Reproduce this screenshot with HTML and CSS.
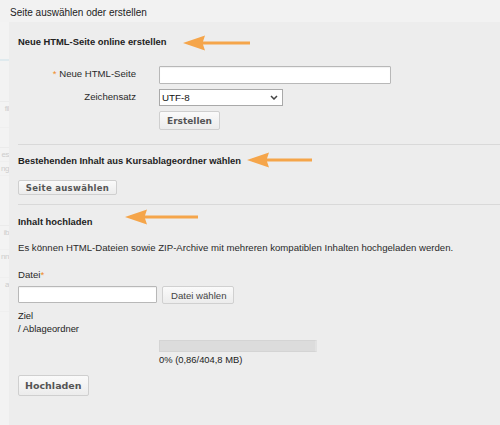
FILE: index.html
```html
<!DOCTYPE html>
<html lang="de">
<head>
<meta charset="utf-8">
<title>Seite auswählen oder erstellen</title>
<link rel="stylesheet" href="styles.css">
</head>
<body>
<div class="page">
  <div class="topbar">Seite auswählen oder erstellen</div>
  <div class="main">
    <div class="side">
      <div class="side-line blue" style="height:39px"></div>
      <div class="side-line" style="height:41px"></div>
      <div class="side-text" style="height:26px">fil</div>
      <div class="side-line" style="height:20px"></div>
      <div class="side-text" style="height:14px">es</div>
      <div class="side-text" style="height:14px">ng</div>
      <div class="side-line" style="height:50px"></div>
      <div class="side-text" style="height:24px">ib</div>
      <div class="side-text" style="height:28px">nn</div>
      <div class="side-text" style="height:34px">a</div>
    </div>
    <div class="panel">
      <section class="sec sec-first">
        <h3 class="sec-title">Neue HTML-Seite online erstellen</h3>
        <div class="form-grid">
          <label class="lbl"><span class="req">*</span> Neue HTML-Seite</label>
          <div class="field"><div class="input input-wide"></div></div>
          <label class="lbl">Zeichensatz</label>
          <div class="field">
            <div class="select">UTF-8
              <svg class="chev" width="8" height="5" viewBox="0 0 8 5"><path d="M1 1 L4 4 L7 1" fill="none" stroke="#444" stroke-width="1.5"/></svg>
            </div>
          </div>
          <div></div>
          <div class="field"><button class="btn">Erstellen</button></div>
        </div>
        <svg class="arrow arrow-1" width="67" height="16" viewBox="0 0 67 16"><path d="M0 8 L22 0.5 L20 6.6 L67 6.6 L67 9.4 L20 9.4 L22 15.5 Z" fill="#f5a54a"/></svg>
      </section>
      <section class="sec sec-second">
        <h3 class="sec-title">Bestehenden Inhalt aus Kursablageordner wählen</h3>
        <button class="btn btn-small">Seite auswählen</button>
        <svg class="arrow arrow-2" width="65" height="16" viewBox="0 0 65 16"><path d="M0 8 L22 0.5 L20 6.6 L65 6.6 L65 9.4 L20 9.4 L22 15.5 Z" fill="#f5a54a"/></svg>
      </section>
      <section class="sec sec-third">
        <h3 class="sec-title">Inhalt hochladen</h3>
        <svg class="arrow arrow-3" width="73" height="16" viewBox="0 0 73 16"><path d="M0 8 L22 0.5 L20 6.6 L73 6.6 L73 9.4 L20 9.4 L22 15.5 Z" fill="#f5a54a"/></svg>
        <p class="desc">Es können HTML-Dateien sowie ZIP-Archive mit mehreren kompatiblen Inhalten hochgeladen werden.</p>
        <div class="file-label">Datei<span class="req">*</span></div>
        <div class="file-row">
          <div class="input input-file"></div>
          <button class="btn-plain">Datei wählen</button>
        </div>
        <div class="target">
          <div>Ziel</div>
          <div>/ Ablageordner</div>
        </div>
        <div class="progress-wrap">
          <div class="progress"><div class="progress-fill" style="width:0%"></div></div>
          <div class="progress-text">0% (0,86/404,8 MB)</div>
        </div>
        <button class="btn btn-upload">Hochladen</button>
      </section>
    </div>
  </div>
</div>
</body>
</html>
```

FILE: styles.css
```css
* { box-sizing: border-box; }
html, body {
  margin: 0;
  padding: 0;
  width: 500px;
  height: 425px;
  overflow: hidden;
  background: #f2f2f2;
  font-family: "Liberation Sans", Arial, sans-serif;
  color: #333;
}
.page {
  display: flex;
  flex-direction: column;
  height: 425px;
}
.topbar {
  height: 22px;
  padding: 7px 0 0 10px;
  font-size: 10px;
  line-height: 12px;
  color: #222;
  background: #f2f2f2;
}
.main {
  flex: 1;
  display: flex;
  min-height: 0;
}
.side {
  width: 9px;
  flex: none;
  overflow: hidden;
  background: #f3f3f3;
}
.side-line {
  border-bottom: 1px solid #ebebeb;
}
.side-line.blue {
  border-bottom: 2px solid #dfeaee;
}
.side-text {
  font-size: 8px;
  line-height: 14px;
  letter-spacing: -0.5px;
  color: #cdcdcd;
  white-space: nowrap;
  text-align: right;
  border-bottom: 1px solid #efefef;
}
.panel {
  flex: 1;
  background: #ededed;
  padding-left: 9px;
  position: relative;
}
.sec {
  position: relative;
  border-bottom: 1px solid #d9d9d9;
}
.sec-third { border-bottom: none; }
.sec-title {
  margin: 0;
  font-size: 9.4px;
  line-height: 14px;
  font-weight: bold;
  color: #222;
}
.sec-first { padding: 13px 0 14px; }
.sec-second { padding: 9px 0 9px; }
.sec-third { padding: 10px 0 0; }
.form-grid {
  display: grid;
  grid-template-columns: 118px 1fr;
  column-gap: 23px;
  row-gap: 5px;
  margin-top: 17px;
  align-items: center;
}
.lbl {
  text-align: right;
  font-size: 9.6px;
  color: #2a2a2a;
  padding-bottom: 3px;
}
.req { color: #f08a24; }
.field { display: flex; }
.input {
  height: 18px;
  background: #fff;
  border: 1px solid #b8b8b8;
  border-radius: 1px;
  box-shadow: inset 0 1px 1px rgba(0,0,0,0.06);
}
.input-wide { width: 232px; }
.select {
  width: 124px;
  height: 17px;
  background: #fff;
  border: 1px solid #a9a9a9;
  font-size: 9.8px;
  line-height: 15px;
  padding-left: 2px;
  color: #111;
  display: flex;
  align-items: center;
  justify-content: space-between;
  padding-right: 4px;
}
.chev { flex: none; }
.btn {
  font-family: "DejaVu Sans", Verdana, sans-serif;
  font-weight: bold;
  font-size: 9px;
  color: #555;
  background: linear-gradient(#fafafa, #ececec);
  border: 1px solid #cfcfcf;
  border-radius: 2px;
  padding: 0 7px;
  height: 19px;
  white-space: nowrap;
}
.btn-small {
  display: block;
  margin-top: 12px;
  height: 15px;
  padding: 0 6px;
  font-size: 8.5px;
  letter-spacing: 0.3px;
  min-width: 99px;
}
.arrow { position: absolute; }
.arrow-1 { left: 165px; top: 13px; }
.arrow-2 { left: 229px; top: 7px; }
.arrow-3 { left: 107px; top: 4px; }
.desc {
  margin: 12px 0 0;
  font-size: 9.6px;
  line-height: 14px;
  color: #2a2a2a;
  white-space: nowrap;
}
.file-label {
  margin-top: 13px;
  font-size: 9.6px;
  line-height: 14px;
  color: #2a2a2a;
}
.file-row {
  display: flex;
  gap: 5px;
  margin-top: 4px;
  align-items: flex-start;
}
.input-file { width: 139px; height: 17px; }
.btn-plain {
  font-family: "Liberation Sans", Arial, sans-serif;
  font-size: 9.6px;
  color: #444;
  background: linear-gradient(#fafafa, #ececec);
  border: 1px solid #d0d0d0;
  border-radius: 2px;
  height: 18px;
  padding: 0 7px 0 8px;
}
.target {
  margin-top: 5px;
  font-size: 9.4px;
  line-height: 13px;
  color: #222;
}
.progress-wrap {
  margin: 5px 0 0 141px;
}
.progress {
  width: 158px;
  height: 12px;
  background: #dcdcdc;
  border: 1px solid #d4d4d4;
  border-right: 2px solid #e2e2e2;
}
.progress-fill { height: 100%; background: #7fb33f; }
.progress-text {
  margin-top: 1px;
  font-size: 9.4px;
  line-height: 13px;
  color: #222;
}
.btn-upload {
  display: block;
  margin-top: 9px;
  height: 21px;
  font-size: 9.5px;
  padding: 0 6px;
}
```
